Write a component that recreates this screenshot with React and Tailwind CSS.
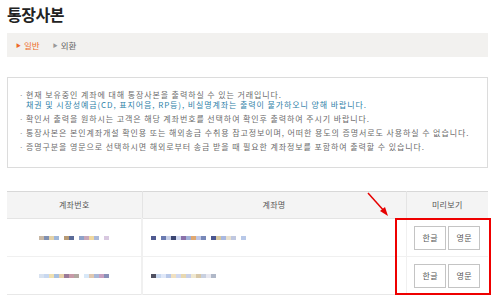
import React from 'react';

const notices = [
  { text: '현재 보유중인 계좌에 대해 통장사본을 출력하실 수 있는 거래입니다.', sub: '채권 및 시장성예금(CD, 표지어음, RP등), 비실명계좌는 출력이 불가하오니 양해 바랍니다.' },
  { text: '확인서 출력을 원하시는 고객은 해당 계좌번호를 선택하여 확인후 출력하여 주시기 바랍니다.' },
  { text: '통장사본은 본인계좌개설 확인용 또는 해외송금 수취용 참고정보이며, 어떠한 용도의 증명서로도 사용하실 수 없습니다.' },
  { text: '증명구분을 영문으로 선택하시면 해외로부터 송금 받을 때 필요한 계좌정보를 포함하여 출력할 수 있습니다.' },
];

// pixelated (masked) values
const masked = {
  acc1: ['#c9b8a4', '#7f8fb0', '#e4d2a8', '#9fb6d8', '#ffffff', '#b79a74', '#5a6a98', '#ffffff', '#8fa2c8', '#c8a6b8', '#f0d8a0', '#aab8d8', '#ffffff', '#d8c8e0'],
  acc2: ['#d8e2f0', '#c8d8f0', '#f0e0b0', '#a8c0e0', '#e8d0a8', '#9a7a98', '#c89aa8', '#b0a8a0', '#ffffff', '#d8e8f8', '#e0c8b0', '#a8b8d8', '#c8a0c0', '#8890b8'],
  name1: ['#505a90', '#ffffff', '#6a7ab0', '#c8d0e8', '#3a4470', '#d0d8f0', '#8a70a8', '#a0b0d8', '#e0a870', '#c0c8e8', '#7888b8', '#ffffff', '#4a5690', '#d8c8a0', '#a8b8e0', '#e8e0d0', '#c0c8e0', '#ffffff', '#b8c8e8'],
  name2: ['#505060', '#c8d8f0', '#e0e8f8', '#b8c8e8', '#f0e0c0', '#d0d8f0', '#e8d8b0', '#c8d0e8', '#f0e8d0', '#d8c8a8', '#c8d0e0', '#e8e8f0', '#b0b8c8'],
};

const Masked = ({ colors }) => (
  <div className="flex blur-[0.4px]">
    {colors.map((c, i) => (
      <span key={i} className="w-[5px] h-[4px]" style={{ backgroundColor: c }} />
    ))}
  </div>
);

const PreviewButtons = () => (
  <div className="flex justify-center gap-[2px]">
    <button className="w-[32px] h-[24px] border border-[#c4c4c4] bg-white text-[8px] text-[#555]">한글</button>
    <button className="w-[32px] h-[24px] border border-[#c4c4c4] bg-white text-[8px] text-[#555]">영문</button>
  </div>
);

const App = () => {
  return (
    <div className="relative w-[500px] h-[306px] overflow-hidden bg-white pl-[7px] pr-[12px] font-['Noto_Sans_CJK_KR','Noto_Sans',sans-serif]">
      {/* Title */}
      <h1 className="pt-[1px] h-[33px] text-[16px] leading-[26px] font-bold tracking-[-0.5px] text-[#222]">통장사본</h1>

      {/* Tabs */}
      <div className="h-[24px] bg-[#f2f1ef] flex items-center pl-[9px] gap-[13px] text-[8.5px]">
        <span className="flex items-center gap-[3px] text-[#ee6a2a]">
          <span className="text-[5px]">▶</span>일반
        </span>
        <span className="flex items-center gap-[3px] text-[#666]">
          <span className="text-[5px] text-[#999]">▶</span>외환
        </span>
      </div>

      {/* Notice */}
      <div className="mt-[20px] h-[91px] border border-[#dcdcdc] pt-[12px] pl-[11px] text-[8px] leading-[10px] text-[#6b6b6b] tracking-[0.9px]">
        {notices.map((n, i) => (
          <div key={i} className="flex mb-[4px]">
            <span className="w-[7px] shrink-0 text-[#999]">·</span>
            <div>
              <p>{n.text}</p>
              {n.sub && <p className="text-[#2f7fa8]">{n.sub}</p>}
            </div>
          </div>
        ))}
      </div>

      {/* Table */}
      <table className="mt-[23px] w-full border-collapse text-[8px] text-[#555] tracking-[0.3px]">
        <thead>
          <tr className="h-[27px] bg-[#f4f4f4] border-t border-[#d8d8d8] border-b border-b-[#e4e4e4]">
            <th className="w-[135px] font-normal border-r border-[#e4e4e4]">계좌번호</th>
            <th className="font-normal border-r border-[#e4e4e4]">계좌명</th>
            <th className="w-[82px] font-normal">미리보기</th>
          </tr>
        </thead>
        <tbody>
          <tr className="h-[38px] border-b border-[#f0f0f0]">
            <td className="border-r-2 border-[#f0f0f0]"><div className="flex justify-end pr-[32px]"><Masked colors={masked.acc1} /></div></td>
            <td className="border-r border-[#f0f0f0] pl-[8px]"><Masked colors={masked.name1} /></td>
            <td><PreviewButtons /></td>
          </tr>
          <tr className="h-[38px] border-b border-[#e8e8e8]">
            <td className="border-r-2 border-[#f0f0f0]"><div className="flex justify-end pr-[32px]"><Masked colors={masked.acc2} /></div></td>
            <td className="border-r border-[#f0f0f0] pl-[8px]"><Masked colors={masked.name2} /></td>
            <td><PreviewButtons /></td>
          </tr>
        </tbody>
      </table>

      {/* Red annotation */}
      <div className="absolute left-[395px] top-[218px] w-[96px] h-[77px] border-2 border-[#ee0000]" />
      <svg className="absolute left-[364px] top-[190px]" width="28" height="30" viewBox="0 0 28 30">
        <line x1="4" y1="3" x2="21" y2="22" stroke="#e60000" strokeWidth="1.5" />
        <polygon points="24,26 16,21 21,17" fill="#e60000" />
      </svg>
    </div>
  );
};

export default App;
